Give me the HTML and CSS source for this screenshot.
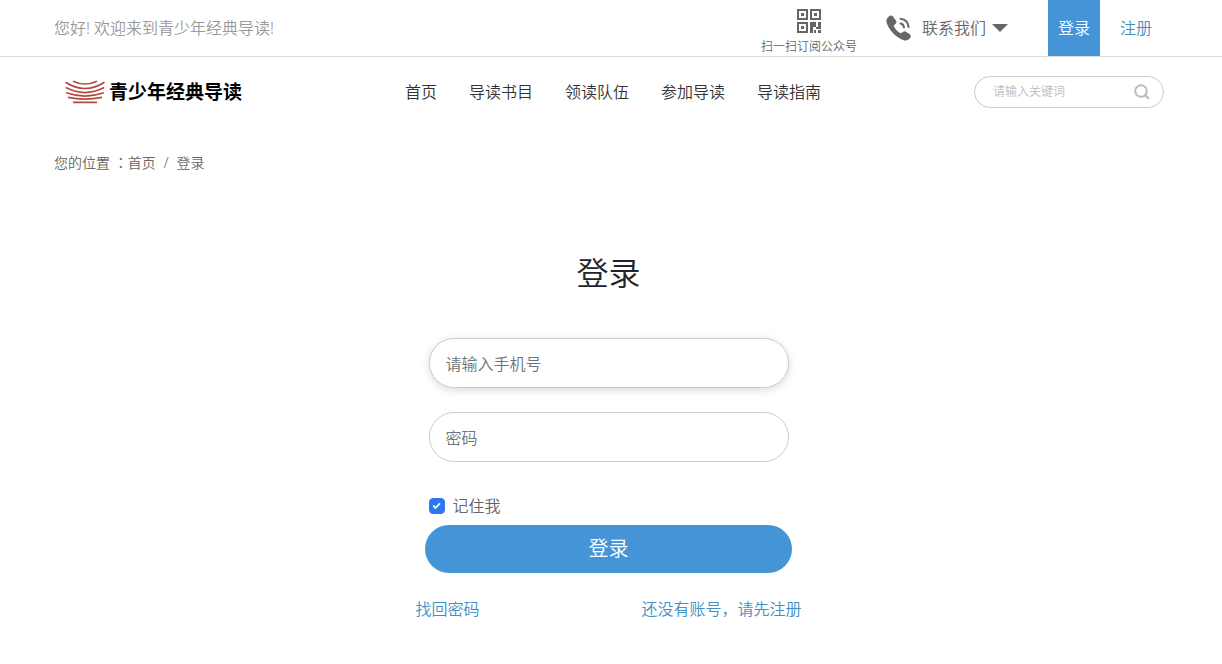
FILE: index.html
```
<!DOCTYPE html>
<html lang="zh-CN">
<head>
<meta charset="UTF-8">
<meta name="viewport" content="width=device-width, initial-scale=1.0">
<title>登录 - 青少年经典导读</title>
<link rel="stylesheet" href="styles.css">
</head>
<body>
<!-- Top bar -->
<div class="topbar">
    <div class="container topbar-inner">
        <span class="welcome">您好! 欢迎来到青少年经典导读!</span>
        <a class="qrcode" href="#">
            <svg width="24" height="24" viewBox="0 0 24 24" fill="#666" aria-hidden="true">
                <path fill-rule="evenodd" d="M0 0h11v11H0zM2 2v7h7V2zM13 0h11v11H13zM15 2v7h7V2zM0 13h11v11H0zM2 15v7h7v-7z"/>
                <path d="M4 4h3v3H4zM17 4h3v3h-3zM4 17h3v3H4zM13 13h6v5h2v-5h3v7h-5v-2h-3v6h-3zM17 21h2v3h-2zM21 21h3v3h-3z"/>
            </svg>
            <span>扫一扫订阅公众号</span>
        </a>
        <button type="button" class="contact">
            <svg width="26" height="26" viewBox="0 0 26 26" aria-hidden="true">
                <path fill="#666" d="M3 1.2 C4.3 0 6 0.2 7 1.5 L10 5.7 C10.8 7 10.6 8 9.6 8.8 L8.3 9.9 C7.7 10.5 7.8 11.2 8.2 12 C9.6 14.4 11.5 16.4 13.7 17.8 C14.5 18.3 15.1 18.4 15.8 17.8 L17.2 16.7 C18 16 19 16 20 16.7 L23.8 19.3 C25 20.2 25.2 21.6 24.3 22.8 C22.4 25.3 20 26.2 17 25 C9.5 22 3.2 15.2 0.7 8 C-0.2 5.2 0.8 3.2 3 1.2Z"/>
                <path fill="none" stroke="#666" stroke-width="2" stroke-linecap="round" d="M14.5 8.4 C16.7 8.8 17.8 10.2 18 12.3M14.6 3.8 C19.5 4.3 22.1 7.2 22.5 12"/>
            </svg>
            <span>联系我们</span>
            <span class="caret"></span>
        </button>
        <a class="top-link active" href="#">登录</a>
        <a class="top-link" href="#">注册</a>
    </div>
</div>

<!-- Logo and navigation -->
<header class="container header">
    <a class="logo" href="#">
        <svg width="40" height="24" viewBox="0 0 40 24" fill="none" stroke="#b34a40" stroke-width="1.7" aria-hidden="true">
            <path d="M8 1.2Q20 6.8 32 1.2M0.5 2.2Q20 14.8 39.5 2.2M0.8 7.6Q20 17.6 39.2 7.6M1.2 12.8Q20 19.4 38.8 12.8M3 17.4Q20 20.8 37 17.4M8 22.4H32"/>
        </svg>
        <span>青少年经典导读</span>
    </a>
    <nav class="nav">
        <a href="#">首页</a>
        <a href="#">导读书目</a>
        <a href="#">领读队伍</a>
        <a href="#">参加导读</a>
        <a href="#">导读指南</a>
    </nav>
    <form class="search">
        <input type="text" placeholder="请输入关键词" aria-label="请输入关键词">
        <button type="submit" aria-label="搜索">
            <svg width="16" height="16" viewBox="0 0 16 16" fill="none" stroke="#bbb" stroke-width="2">
                <circle cx="7" cy="7" r="5.8"/>
                <path d="M11.2 11.2L14.8 14.8"/>
            </svg>
        </button>
    </form>
</header>

<!-- Breadcrumb -->
<div class="container breadcrumb">
    <span>您的位置 <span class="punct" lang="zh-TW">：</span></span>
    <a href="#">首页</a>
    <span class="separator">/</span>
    <span>登录</span>
</div>

<!-- Login form -->
<main class="login">
    <h1>登录</h1>
    <form class="login-form">
        <div class="fields">
            <input class="field raised" type="text" placeholder="请输入手机号" aria-label="请输入手机号">
            <input class="field" type="password" placeholder="密码" aria-label="密码">
            <div class="remember">
                <input type="checkbox" id="remember" checked>
                <label for="remember">记住我</label>
            </div>
        </div>
        <button type="submit" class="submit">登录</button>
        <div class="links">
            <a href="#">找回密码</a>
            <a href="#">还没有账号，请先注册</a>
        </div>
    </form>
</main>
</body>
</html>
```
FILE: styles.css
```
* {
    box-sizing: border-box;
}

body {
    margin: 0;
    background-color: #fff;
    color: #212529;
    font-family: "Noto Sans", "Noto Sans CJK SC", sans-serif;
    font-size: 16px;
    font-weight: 350;
    line-height: 24px;
}

a {
    color: #4090c4;
    text-decoration: none;
}

input,
button {
    font: inherit;
}

button {
    padding: 0;
    border: none;
    background: none;
    cursor: pointer;
}

svg {
    display: block;
    flex-shrink: 0;
}

/* full-width colon centred in its cell */
.punct {
    font-family: "Noto Sans", "Noto Sans CJK TC", sans-serif;
}

.container {
    max-width: 1140px;
    margin: 0 auto;
    padding: 0 17px 0 13px;
}

/* Top bar */
.topbar {
    border-bottom: 1px solid #ddd;
}

.topbar-inner {
    display: flex;
    align-items: center;
    height: 56px;
}

.welcome {
    margin-right: auto;
    color: #999;
}

.qrcode {
    display: flex;
    flex-direction: column;
    align-items: center;
    gap: 6px;
    padding-top: 8px;
    color: #666;
    font-size: 12px;
    line-height: 16px;
}

.contact {
    display: flex;
    align-items: center;
    margin: 0 40px 0 29px;
    color: #666;
}

.contact svg {
    margin-right: 10px;
}

.caret {
    margin-left: 6px;
    border: 8px solid transparent;
    border-top-color: #666;
    border-bottom: none;
}

.top-link {
    width: 52px;
    line-height: 56px;
    text-align: center;
}

.top-link + .top-link {
    margin: 0 2px 0 10px;
}

.top-link.active {
    background-color: #4594d8;
    color: #fff;
}

/* Header */
.header {
    display: flex;
    align-items: center;
    height: 70px;
}

.logo {
    display: flex;
    align-items: center;
    gap: 4px;
    margin-left: 11px;
    color: #000;
    font-size: 19px;
    font-weight: 700;
}

.nav {
    display: flex;
    gap: 32px;
    margin: 0 auto 0 163px;
}

.nav a {
    color: #333;
}

.search {
    display: flex;
    align-items: center;
    width: 190px;
    height: 32px;
    padding: 0 13px 0 18px;
    border: 1px solid #ccc;
    border-radius: 16px;
}

.search input {
    flex: 1;
    min-width: 0;
    padding: 0;
    border: none;
    outline: none;
    font-size: 12px;
}

.search input::placeholder {
    color: #bbb;
}

/* Breadcrumb */
.breadcrumb {
    display: flex;
    padding-top: 24px;
    color: #666;
    font-size: 14px;
}

.breadcrumb a {
    color: #666;
}

.separator {
    margin: 0 8px;
}

/* Login */
.login {
    padding: 78px 5px 40px 0;
}

.login h1 {
    margin: 0 0 45px;
    font-size: 32px;
    font-weight: 350;
    line-height: 40px;
    text-align: center;
}

.login-form {
    display: flex;
    flex-direction: column;
    align-items: center;
}

.fields {
    display: flex;
    flex-direction: column;
    gap: 24px;
    width: 360px;
}

.field {
    height: 50px;
    padding: 2px 16px 0;
    border: 1px solid #ccc;
    border-radius: 25px;
    outline: none;
}

.field::placeholder {
    color: #6c757d;
}

.raised {
    box-shadow: 0 2px 8px rgba(0, 0, 0, 0.15);
}

.remember {
    display: flex;
    align-items: center;
    gap: 8px;
    padding-top: 8px;
    color: #666;
}

.remember input {
    display: grid;
    place-content: center;
    width: 16px;
    height: 16px;
    margin: 0;
    border-radius: 4px;
    appearance: none;
    border: 1px solid #2f76ee;
}

.remember input:checked {
    background-color: #2f76ee;
}

.remember input:checked::before {
    content: "";
    width: 8px;
    height: 8px;
    background-color: #fff;
    clip-path: polygon(0 50%, 14% 34%, 38% 58%, 84% 10%, 100% 26%, 38% 90%);
}

.submit {
    width: 367px;
    height: 48px;
    margin-top: 7px;
    border-radius: 24px;
    background-color: #4594d8;
    color: #fff;
    font-size: 20px;
}

.links {
    display: flex;
    justify-content: space-between;
    width: 386px;
    margin-top: 24px;
}
```
